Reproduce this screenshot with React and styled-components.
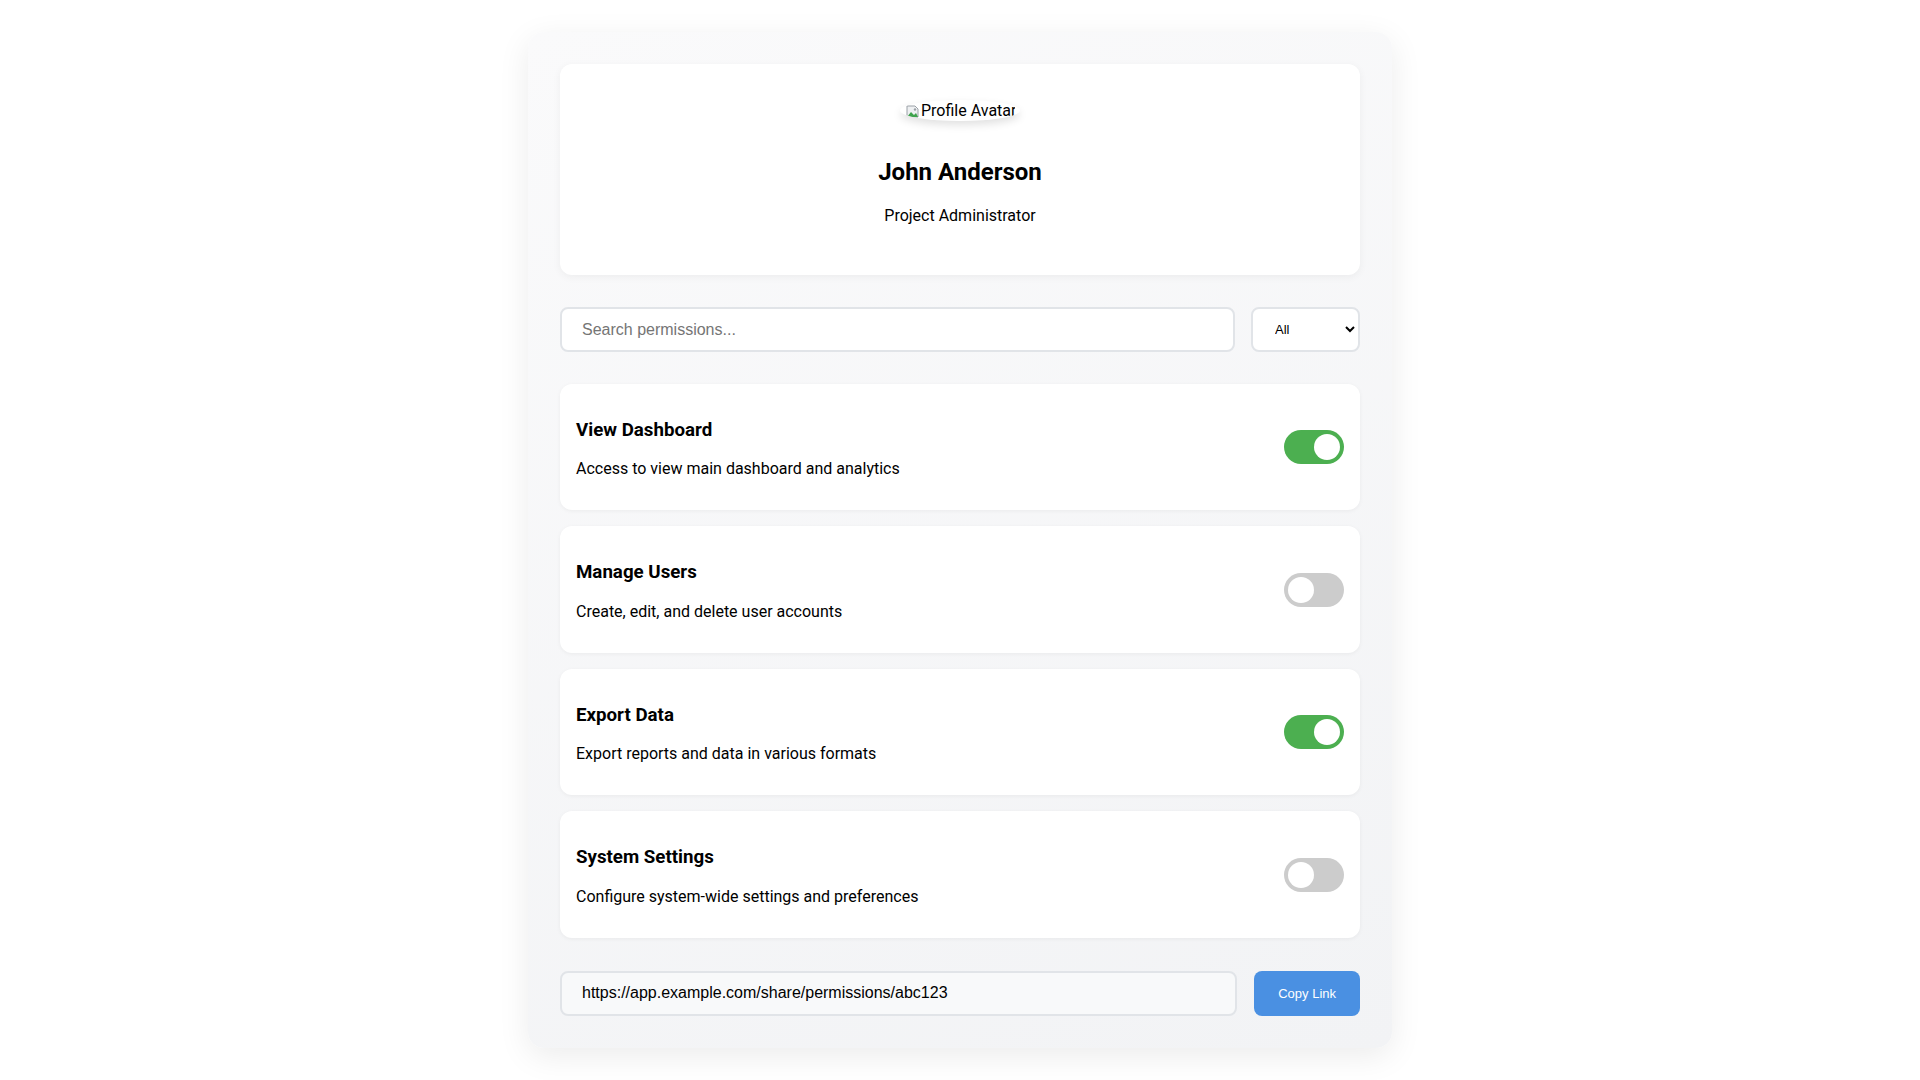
import React, { useState } from 'react'
import styled, { createGlobalStyle } from 'styled-components'

const GlobalStyle = createGlobalStyle`
  body {
    margin: 0;
    background: #ffffff;
    font-family: Roboto, 'Liberation Sans', sans-serif;
    color: #000;
  }
`

const Container = styled.div`
  width: 800px;
  margin: 32px auto;
  padding: 32px;
  border-radius: 16px;
  background: linear-gradient(160deg, #fafafb 0%, #f2f3f5 100%);
  box-shadow: 0 8px 32px rgba(0, 0, 0, 0.08);
`

const ProfileCard = styled.div`
  background: #fff;
  border-radius: 12px;
  padding: 32px;
  text-align: center;
  box-shadow: 0 2px 8px rgba(0, 0, 0, 0.05);
  margin-bottom: 32px;
`

const Avatar = styled.div`
  width: 120px;
  height: 21px;
  margin: 4px auto 37px;
  border-radius: 50%;
  box-shadow: 0 4px 8px rgba(0, 0, 0, 0.12);
  display: flex;
  align-items: center;
  padding-left: 5px;
  box-sizing: border-box;
  overflow: hidden;
`

const AvatarAlt = styled.span`
  display: flex;
  align-items: center;
  width: 110px;
  overflow: hidden;
  white-space: nowrap;
  font-size: 16px;
  line-height: 1;
`

const Name = styled.h2`
  font-size: 24px;
  font-weight: 700;
  margin: 0 0 20px;
`

const Role = styled.p`
  font-size: 16px;
  margin: 0 0 18px;
`

const Toolbar = styled.div`
  display: flex;
  gap: 16px;
  margin-bottom: 32px;
`

const Field = styled.input`
  flex: 1;
  height: 45px;
  box-sizing: border-box;
  padding: 0 20px;
  border: 2px solid #e1e4e8;
  border-radius: 8px;
  font-family: 'Liberation Sans', Arial, sans-serif;
  font-size: 16px;
  color: #000;
  background: ${p => (p.$muted ? '#f8f9fa' : '#fff')};
  outline: none;
  &::placeholder {
    color: #757575;
  }
`

const Filter = styled.select`
  width: 109px;
  height: 45px;
  padding: 0 10px 0 18px;
  border: 2px solid #e1e4e8;
  border-radius: 8px;
  background: #fff;
  font-family: 'Liberation Sans', Arial, sans-serif;
  font-size: 13px;
  color: #000;
`

const PermissionCard = styled.div`
  display: flex;
  align-items: center;
  justify-content: space-between;
  background: #fff;
  border-radius: 12px;
  padding: 0 16px;
  margin-bottom: 16px;
  box-shadow: 0 1px 4px rgba(0, 0, 0, 0.05);
`

const PermissionInfo = styled.div`
  padding: 16px 0;
  h3 {
    font-size: 18.72px;
    font-weight: 700;
    margin: 18.72px 0;
  }
  p {
    font-size: 16px;
    margin: 16px 0;
  }
`

const Switch = styled.label`
  position: relative;
  display: inline-block;
  width: 60px;
  height: 34px;
  flex-shrink: 0;
  cursor: pointer;
  input {
    opacity: 0;
    width: 0;
    height: 0;
  }
`

const Slider = styled.span`
  position: absolute;
  inset: 0;
  border-radius: 34px;
  background: ${p => (p.$on ? '#4caf50' : '#cccccc')};
  transition: 0.3s;
  &::before {
    content: '';
    position: absolute;
    width: 26px;
    height: 26px;
    left: 4px;
    bottom: 4px;
    border-radius: 50%;
    background: #fff;
    transform: translateX(${p => (p.$on ? '26px' : '0')});
    transition: 0.3s;
  }
`

const ShareRow = styled.div`
  display: flex;
  gap: 17px;
  margin-top: 33px;
`

const CopyButton = styled.button`
  height: 45px;
  padding: 0 24px;
  border: none;
  border-radius: 8px;
  background: #4a90e2;
  color: #fff;
  font-family: 'Liberation Sans', Arial, sans-serif;
  font-size: 13px;
  cursor: pointer;
`

const BrokenImage = () => (
  <svg width="16" height="16" viewBox="0 0 16 16" style={{ flexShrink: 0 }}>
    <path d="M2 3h8l3 3v8H2z" fill="#eef0f2" stroke="#9aa0a6" strokeWidth="1" />
    <path d="M2 14l4-5 3 3 2-2 2 4z" fill="#3fa34d" />
    <circle cx="10" cy="6.5" r="1.2" fill="#9aa0a6" />
  </svg>
)

const permissionsData = [
  { id: 1, name: 'View Dashboard', description: 'Access to view main dashboard and analytics', enabled: true },
  { id: 2, name: 'Manage Users', description: 'Create, edit, and delete user accounts', enabled: false },
  { id: 3, name: 'Export Data', description: 'Export reports and data in various formats', enabled: true },
  { id: 4, name: 'System Settings', description: 'Configure system-wide settings and preferences', enabled: false },
]

const App = () => {
  const [permissions, setPermissions] = useState(permissionsData)
  const [search, setSearch] = useState('')

  const toggle = (id) => {
    setPermissions(permissions.map(p => (p.id === id ? { ...p, enabled: !p.enabled } : p)))
  }

  const shown = permissions.filter(p => p.name.toLowerCase().includes(search.toLowerCase()))

  return (
    <>
      <GlobalStyle />
      <Container>
        <ProfileCard>
          <Avatar>
            <AvatarAlt>
              <BrokenImage />
              Profile Avatar
            </AvatarAlt>
          </Avatar>
          <Name>John Anderson</Name>
          <Role>Project Administrator</Role>
        </ProfileCard>

        <Toolbar>
          <Field
            type="text"
            placeholder="Search permissions..."
            value={search}
            onChange={e => setSearch(e.target.value)}
          />
          <Filter defaultValue="all">
            <option value="all">All</option>
            <option value="enabled">Enabled</option>
            <option value="disabled">Disabled</option>
          </Filter>
        </Toolbar>

        {shown.map(p => (
          <PermissionCard key={p.id}>
            <PermissionInfo>
              <h3>{p.name}</h3>
              <p>{p.description}</p>
            </PermissionInfo>
            <Switch>
              <input type="checkbox" checked={p.enabled} onChange={() => toggle(p.id)} />
              <Slider $on={p.enabled} />
            </Switch>
          </PermissionCard>
        ))}

        <ShareRow>
          <Field $muted readOnly value="https://app.example.com/share/permissions/abc123" />
          <CopyButton>Copy Link</CopyButton>
        </ShareRow>
      </Container>
    </>
  )
}

export default App
